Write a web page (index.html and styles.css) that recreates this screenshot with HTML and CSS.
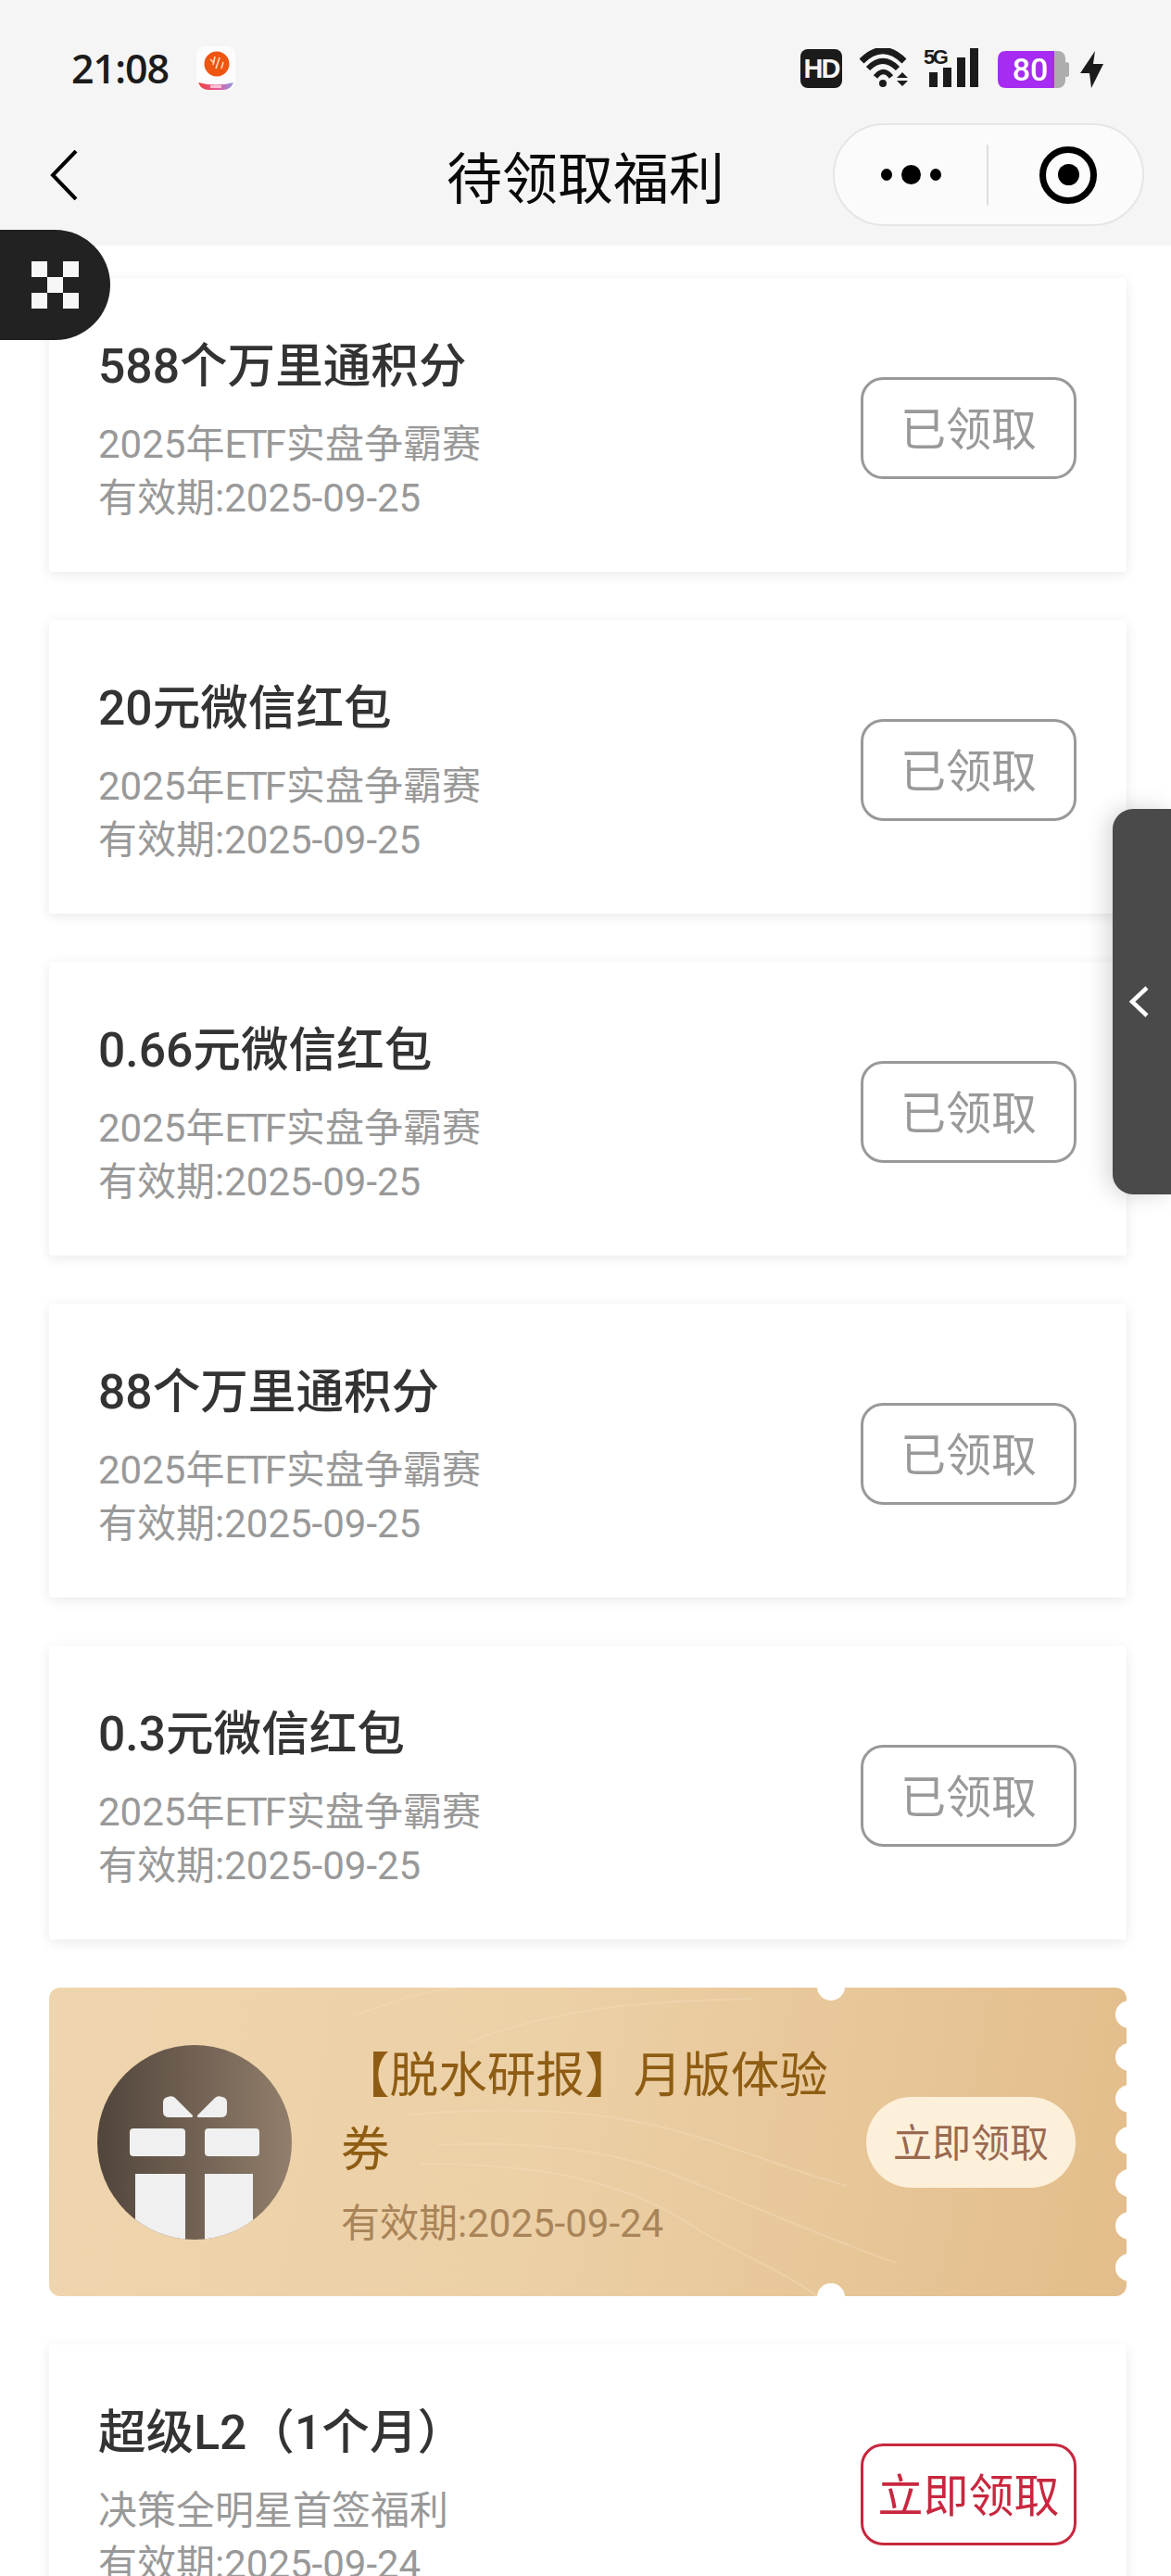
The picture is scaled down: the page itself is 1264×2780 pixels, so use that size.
FILE: index.html
```html
<!DOCTYPE html>
<html>
<head>
   <meta charset="utf-8">
   <meta name="viewport" content="width=device-width, initial-scale=1">
   <title>待领取福利</title>
   <link rel="stylesheet" href="styles.css">
</head>
<body>
   <div class="top">
      <div class="status">
         <div class="status-left">
            <span class="time">21:08</span>
            <svg class="app-icon" width="42" height="47" viewBox="0 0 42 47">
               <defs>
                  <linearGradient id="band" x1="0" x2="1" y1="0" y2="0">
                     <stop offset="0" stop-color="#e8443f"/>
                     <stop offset=".55" stop-color="#e65a9a"/>
                     <stop offset="1" stop-color="#8f9ae6"/>
                  </linearGradient>
               </defs>
               <rect width="42" height="47" rx="9" fill="#fdfdfd"/>
               <circle cx="22" cy="19" r="13.5" fill="#ee5612"/>
               <path d="M15 14l3 3M20 11l-2 9M25 12l-4 12M29 17l-2 7" stroke="#ffdcc0" stroke-width="1.6"/>
               <path d="M2 39q19 5 38 0q-3 8-11 8h-16q-8 0-11-8z" fill="url(#band)"/>
               <rect x="15" y="42" width="12" height="3" fill="#ffd9e4" opacity=".8"/>
            </svg>
         </div>
         <div class="status-right">
            <div class="hd">HD</div>
            <svg class="wifi" width="52" height="42" viewBox="0 0 52 42" fill="none" stroke="#1b1b1b">
               <path d="M2 14Q25-9 48 14" stroke-width="7"/>
               <path d="M9 22Q25 6 41 22" stroke-width="6"/>
               <path d="M17 31Q25.5 20 34 31" stroke-width="5.5"/>
               <circle cx="25" cy="38" r="4" fill="#1b1b1b" stroke="none"/>
               <path d="M40 32l6-6l6 6zM40 35h12l-6 6z" fill="#1b1b1b" stroke="none"/>
            </svg>
            <div class="signal">
               <div class="five-g">5G</div>
               <svg width="60" height="42" viewBox="0 0 60 42">
                  <rect x="6" y="26" width="9" height="16"/>
                  <rect x="21" y="21" width="9" height="21"/>
                  <rect x="36" y="10" width="9" height="32"/>
                  <rect x="50" y="0" width="9" height="42"/>
               </svg>
            </div>
            <svg class="battery" width="77" height="40" viewBox="0 0 77 40">
               <rect x="72" y="12" width="5" height="16" rx="2.5" fill="#adadad"/>
               <rect x="55" width="18" height="40" rx="8" fill="#adadad"/>
               <path d="M9 0H61V40H9Q0 40 0 31V9Q0 0 9 0Z" fill="#a52cf0"/>
               <text class="batt-num" x="35" y="32" text-anchor="middle">80</text>
            </svg>
            <svg class="bolt" width="25" height="40" viewBox="0 0 25 40">
               <path d="M16 0L0 24H10L12 40L25 14H14Z" fill="#1b1b1b"/>
            </svg>
         </div>
      </div>
      <div class="nav">
         <svg class="back" width="30" height="54" viewBox="0 0 30 54" fill="none">
            <path d="M28 1L3 27L28 53" stroke="#000" stroke-width="4"/>
         </svg>
         <div class="page-title">待领取福利</div>
         <div class="capsule">
            <div class="dots"><i></i><b></b><i></i></div>
            <div class="target"><span></span></div>
         </div>
      </div>
   </div>

   <div class="float-pill">
      <div class="checker"><i></i><i></i><i></i><i></i><i></i></div>
   </div>

   <div class="side-tab">
      <svg width="22" height="34" viewBox="0 0 22 34" fill="none">
         <path d="M20 2L4 17L20 32" stroke="#fff" stroke-width="4.5"/>
      </svg>
   </div>

   <div class="list">
      <div class="card">
         <div class="info">
            <div class="name">588个万里通积分</div>
            <div class="sub">2025年<span class="etf">ETF</span>实盘争霸赛</div>
            <div class="sub">有效期:2025-09-25</div>
         </div>
         <div class="btn">已领取</div>
      </div>
      <div class="card">
         <div class="info">
            <div class="name">20元微信红包</div>
            <div class="sub">2025年<span class="etf">ETF</span>实盘争霸赛</div>
            <div class="sub">有效期:2025-09-25</div>
         </div>
         <div class="btn">已领取</div>
      </div>
      <div class="card">
         <div class="info">
            <div class="name">0.66元微信红包</div>
            <div class="sub">2025年<span class="etf">ETF</span>实盘争霸赛</div>
            <div class="sub">有效期:2025-09-25</div>
         </div>
         <div class="btn">已领取</div>
      </div>
      <div class="card">
         <div class="info">
            <div class="name">88个万里通积分</div>
            <div class="sub">2025年<span class="etf">ETF</span>实盘争霸赛</div>
            <div class="sub">有效期:2025-09-25</div>
         </div>
         <div class="btn">已领取</div>
      </div>
      <div class="card">
         <div class="info">
            <div class="name">0.3元微信红包</div>
            <div class="sub">2025年<span class="etf">ETF</span>实盘争霸赛</div>
            <div class="sub">有效期:2025-09-25</div>
         </div>
         <div class="btn">已领取</div>
      </div>

      <div class="coupon">
         <svg class="coupon-bg" width="1163" height="333" viewBox="0 0 1163 333" fill="none">
            <g stroke="#f6e3c4" stroke-opacity=".32" stroke-width="2">
               <path d="M390 137C500 128 600 130 700 161C770 183 810 200 861 214"/>
               <path d="M420 170C520 165 610 175 680 204C770 240 850 275 914 297"/>
               <path d="M400 190C520 190 620 205 700 261C750 290 790 305 829 333"/>
               <path d="M450 60C540 25 620 15 760 12"/>
               <path d="M330 30C370 15 400 5 440 0"/>
            </g>
            <g fill="#fff">
               <circle cx="844" cy="-1" r="15"/>
               <circle cx="844" cy="334" r="15"/>
               <circle cx="1166" cy="29" r="15"/>
               <circle cx="1166" cy="75" r="15"/>
               <circle cx="1166" cy="120" r="15"/>
               <circle cx="1166" cy="165" r="15"/>
               <circle cx="1166" cy="211" r="15"/>
               <circle cx="1166" cy="257" r="15"/>
               <circle cx="1166" cy="302" r="15"/>
            </g>
         </svg>
         <svg class="gift" width="210" height="210" viewBox="0 0 210 210">
            <defs>
               <linearGradient id="giftbg" x1="0" x2="1" y1="0" y2="0">
                  <stop offset="0" stop-color="#51453c"/>
                  <stop offset="1" stop-color="#927e6b"/>
               </linearGradient>
               <clipPath id="round"><circle cx="105" cy="105" r="105"/></clipPath>
            </defs>
            <g clip-path="url(#round)">
               <rect width="210" height="210" fill="url(#giftbg)"/>
               <g fill="#f0f0f0">
                  <path d="M76 56Q81 54 84 57L103 76Q104 78 100 78H78Q71 78 71 72V62Q71 57 76 56Z"/>
                  <path d="M135 56Q130 54 127 57L108 76Q107 78 111 78H133Q140 78 140 72V62Q140 57 135 56Z"/>
                  <rect x="35" y="90" width="60" height="30" rx="4"/>
                  <rect x="116" y="90" width="59" height="30" rx="4"/>
                  <rect x="41" y="139" width="54" height="72"/>
                  <rect x="116" y="139" width="52" height="72"/>
               </g>
            </g>
         </svg>
         <div class="coupon-info">
            <div class="coupon-name">【脱水研报】月版体验券</div>
            <div class="coupon-date">有效期:2025-09-24</div>
         </div>
         <div class="coupon-btn">立即领取</div>
      </div>

      <div class="card">
         <div class="info">
            <div class="name">超级L2（1个月）</div>
            <div class="sub">决策全明星首签福利</div>
            <div class="sub">有效期:2025-09-24</div>
         </div>
         <div class="btn btn-red">立即领取</div>
      </div>
   </div>
</body>
</html>
```

FILE: styles.css
```css
html, body {
   margin: 0;
   height: 2780px;
   overflow: hidden;
}

body {
   position: relative;
   background: #fff;
   font-family: Roboto, "Noto Sans CJK SC", sans-serif;
}

.top {
   height: 265px;
   background: #f5f5f5;
}

.status {
   display: flex;
   justify-content: space-between;
   padding: 52px 73px 0 77px;
   height: 43px;
}

.status-left {
   display: flex;
   align-items: center;
   gap: 30px;
}

.time {
   font-family: "Open Sans", sans-serif;
   font-size: 43px;
   font-weight: 600;
   letter-spacing: -1px;
   color: #1b1b1b;
}

.status-right {
   display: flex;
   align-items: flex-start;
   margin-top: 1px;
}

.hd {
   width: 45px;
   height: 42px;
   background: #1b1b1b;
   border-radius: 8px;
   color: #f5f5f5;
   font-family: "Liberation Sans Narrow", "Liberation Sans", sans-serif;
   font-size: 29px;
   font-weight: 700;
   line-height: 43px;
   text-align: center;
   letter-spacing: -2px;
}

.wifi {
   margin-left: 19px;
   margin-top: -1px;
}

.signal {
   position: relative;
   width: 60px;
   height: 42px;
   margin-left: 17px;
   margin-top: -1px;
}

.signal svg {
   display: block;
}

.signal rect {
   fill: #1b1b1b;
}

.five-g {
   position: absolute;
   left: 0;
   top: -1px;
   font-family: "Liberation Sans", sans-serif;
   font-size: 22px;
   font-weight: 700;
   line-height: 22px;
   letter-spacing: -2.5px;
   color: #1b1b1b;
}

.battery {
   margin-top: 2px;
   margin-left: 20px;
}

.batt-num {
   font-family: Roboto, sans-serif;
   font-size: 34px;
   font-weight: 500;
   fill: #fff;
}

.bolt {
   margin-top: 2px;
   margin-left: 12px;
}

.nav {
   display: grid;
   grid-template-columns: 1fr auto 1fr;
   align-items: center;
   margin-top: 38px;
   padding: 0 29px;
}

.back {
   display: block;
   margin-left: 25px;
}

.page-title {
   padding-top: 12px;
   font-size: 60px;
   line-height: 80px;
   color: #0a0a0a;
}

.capsule {
   justify-self: end;
   display: flex;
   align-items: center;
   box-sizing: border-box;
   width: 336px;
   height: 111px;
   background: #fbfbfb;
   border: 2px solid #e6e6e6;
   border-radius: 56px;
}

.dots {
   display: flex;
   align-items: center;
   gap: 10px;
   width: 166px;
   height: 66px;
   padding-left: 50px;
   box-sizing: border-box;
   border-right: 2px solid #dedede;
}

.dots i {
   width: 12px;
   height: 13px;
   background: #000;
   border-radius: 50%;
}

.dots b {
   width: 21px;
   height: 21px;
   background: #000;
   border-radius: 50%;
}

.target {
   display: flex;
   align-items: center;
   justify-content: center;
   box-sizing: border-box;
   width: 62px;
   height: 62px;
   margin-left: 55px;
   border: 7px solid #000;
   border-radius: 50%;
}

.target span {
   width: 23px;
   height: 23px;
   background: #000;
   border-radius: 50%;
}

.float-pill {
   position: absolute;
   left: 0;
   top: 248px;
   display: flex;
   align-items: center;
   width: 119px;
   height: 119px;
   padding-left: 34px;
   box-sizing: border-box;
   background: #222;
   border-radius: 0 60px 60px 0;
}

.checker {
   display: grid;
   grid-template-columns: repeat(3, 17px);
   grid-template-rows: repeat(3, 17px);
}

.checker i {
   background: #f7f7f7;
}

.checker i:nth-child(1) { grid-area: 1 / 1; }
.checker i:nth-child(2) { grid-area: 1 / 3; }
.checker i:nth-child(3) { grid-area: 2 / 2; }
.checker i:nth-child(4) { grid-area: 3 / 1; }
.checker i:nth-child(5) { grid-area: 3 / 3; }

.side-tab {
   position: absolute;
   right: 0;
   top: 873px;
   display: flex;
   align-items: center;
   width: 63px;
   height: 416px;
   padding-left: 17px;
   box-sizing: border-box;
   background: #4a4a4a;
   border-radius: 22px 0 0 22px;
   box-shadow: -6px 0 24px rgba(0, 0, 0, .16);
}

.list {
   display: flex;
   flex-direction: column;
   gap: 52px;
   padding: 35px 48px 0 53px;
}

.card {
   display: flex;
   align-items: center;
   justify-content: space-between;
   height: 317px;
   box-sizing: border-box;
   padding: 57px 54px 51px 53px;
   background: #fff;
   border-radius: 4px;
   box-shadow: 0 3px 14px rgba(0, 0, 0, .09);
}

.name {
   padding-top: 3px;
   margin-bottom: 19px;
   font-size: 51.6px;
   font-weight: 500;
   line-height: 72px;
   color: #333;
}

.sub {
   font-size: 42px;
   line-height: 58px;
   color: #999;
}

.etf {
   letter-spacing: -3px;
   margin-right: 3px;
}

.btn {
   width: 233px;
   height: 110px;
   box-sizing: border-box;
   border: 3px solid #999;
   border-radius: 24px;
   color: #999;
   font-size: 49px;
   line-height: 110px;
   text-align: center;
}

.btn-red {
   border-color: #c8273f;
   color: #c8273f;
}

.coupon {
   position: relative;
   display: flex;
   align-items: center;
   height: 333px;
   padding-left: 52px;
   box-sizing: border-box;
   background: linear-gradient(100deg, #efd5ae 0%, #ecd0a6 45%, #e3bd8b 100%);
   border-radius: 12px;
   overflow: hidden;
}

.coupon-bg {
   position: absolute;
   left: 0;
   top: 0;
}

.gift {
   position: relative;
   flex: none;
}

.coupon-info {
   position: relative;
   box-sizing: border-box;
   width: 540px;
   margin-left: 53px;
   padding-top: 6px;
}

.coupon-name {
   font-size: 52.6px;
   line-height: 80px;
   color: #8e5d13;
}

.coupon-date {
   margin-top: 11px;
   font-size: 42px;
   line-height: 58px;
   color: #a98459;
}

.coupon-btn {
   position: relative;
   width: 226px;
   height: 98px;
   margin-left: 27px;
   background: #fdf0da;
   border-radius: 49px;
   color: #9a6a50;
   font-size: 42px;
   line-height: 102px;
   text-align: center;
}
```
